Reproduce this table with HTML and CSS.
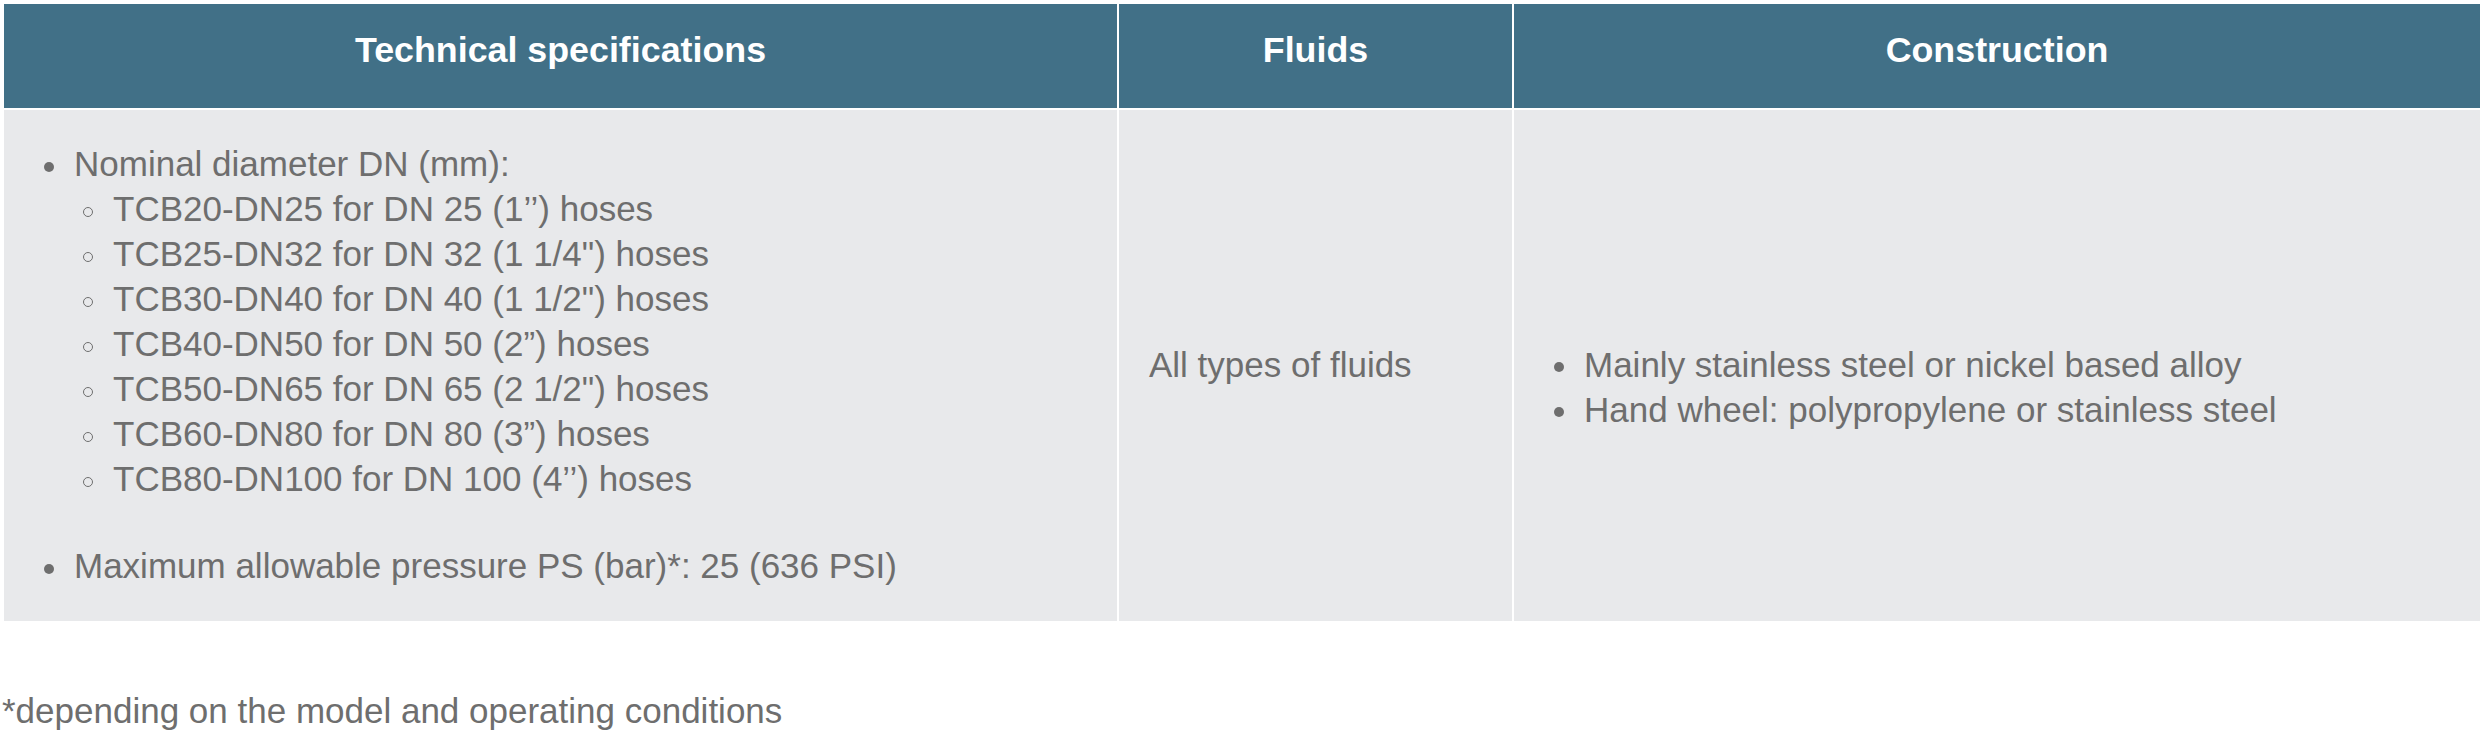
FILE: index.html
```html
<!DOCTYPE html>
<html lang="en">
<head>
<meta charset="utf-8">
<title>Technical specifications</title>
<link rel="stylesheet" href="styles.css">
</head>
<body>
<table class="spec-table">
  <thead>
    <tr>
      <th class="col-tech">Technical specifications</th>
      <th class="col-fluids">Fluids</th>
      <th class="col-constr">Construction</th>
    </tr>
  </thead>
  <tbody>
    <tr>
      <td class="cell-tech">
        <ul class="list">
          <li>Nominal diameter DN (mm):
            <ul class="sublist">
              <li>TCB20-DN25 for DN 25 (1’’) hoses</li>
              <li>TCB25-DN32 for DN 32 (1 1/4") hoses</li>
              <li>TCB30-DN40 for DN 40 (1 1/2") hoses</li>
              <li>TCB40-DN50 for DN 50 (2”) hoses</li>
              <li>TCB50-DN65 for DN 65 (2 1/2") hoses</li>
              <li>TCB60-DN80 for DN 80 (3”) hoses</li>
              <li>TCB80-DN100 for DN 100 (4’’) hoses</li>
            </ul>
          </li>
          <li class="spaced">Maximum allowable pressure PS (bar)*: 25 (636 PSI)</li>
        </ul>
      </td>
      <td class="cell-fluids">All types of fluids</td>
      <td class="cell-constr">
        <ul class="list list-constr">
          <li>Mainly stainless steel or nickel based alloy</li>
          <li>Hand wheel: polypropylene or stainless steel</li>
        </ul>
      </td>
    </tr>
  </tbody>
</table>
<p class="footnote">*depending on the model and operating conditions</p>
</body>
</html>
```

FILE: styles.css
```css
html, body {
  margin: 0;
  background: #ffffff;
}
body {
  padding: 2px;
  font-family: "Liberation Sans", Arial, sans-serif;
  color: #6e6e6e;
  font-size: 35px;
  line-height: 45px;
}
.spec-table {
  width: 2480px;
  table-layout: fixed;
  border-collapse: separate;
  border-spacing: 2px;
}
.spec-table th,
.spec-table td {
  box-sizing: border-box;
}
.spec-table th {
  background: #417087;
  color: #ffffff;
  font-weight: bold;
  font-size: 35.8px;
  line-height: 45px;
  text-align: center;
  padding: 24px 10px 35px;
}
.col-tech { width: 1113px; }
.col-fluids { width: 393px; }
.col-constr { width: 966px; }
.spec-table td {
  background: #e8e9eb;
  vertical-align: middle;
  padding: 31px 30px 33px;
}
.list {
  list-style: none;
  margin: 0;
  padding: 0 0 0 40px;
}
.list > li::before {
  content: "";
  display: inline-block;
  width: 10px;
  height: 10px;
  border-radius: 50%;
  background: #6e6e6e;
  margin-left: -30px;
  margin-right: 20px;
  vertical-align: middle;
}
.sublist {
  list-style: none;
  margin: 0;
  padding: 0 0 0 39px;
}
.sublist > li::before {
  content: "";
  display: inline-block;
  box-sizing: border-box;
  width: 10px;
  height: 10px;
  border-radius: 50%;
  border: 1.5px solid #6e6e6e;
  margin-left: -30px;
  margin-right: 20px;
  vertical-align: middle;
}
.list > li.spaced {
  margin-top: 42px;
}
.list-constr {
  margin-top: 44px;
}
.footnote {
  margin: 65px 0 0;
  font-size: 35px;
  line-height: 45px;
}
```
